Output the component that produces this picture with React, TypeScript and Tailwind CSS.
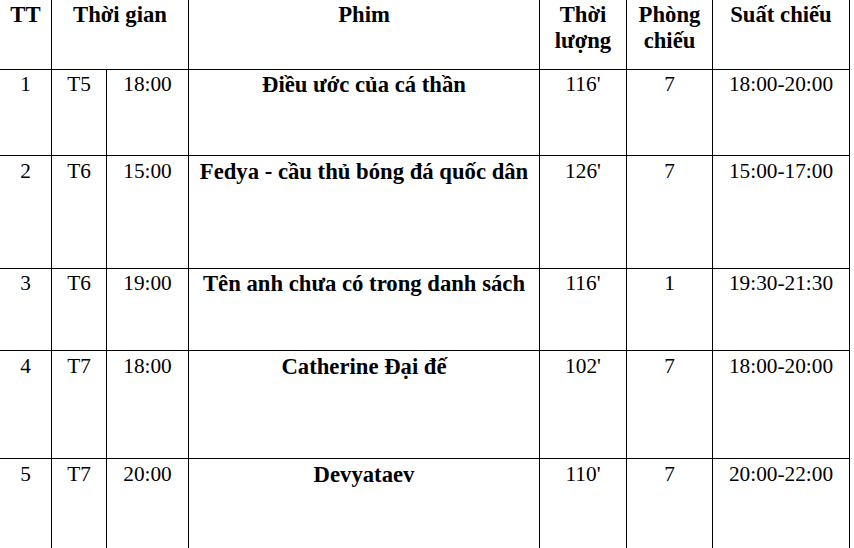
const COLS = 'grid-cols-[52px_55px_82px_351px_87px_86px_137px]'

const ROWS = [
  { tt: '1', day: 'T5', time: '18:00', film: 'Điều ước của cá thần', len: "116'", room: '7', show: '18:00-20:00', h: 'h-[86px]', pt: 'pt-[2px]' },
  { tt: '2', day: 'T6', time: '15:00', film: 'Fedya - cầu thủ bóng đá quốc dân', len: "126'", room: '7', show: '15:00-17:00', h: 'h-[113px]', pt: 'pt-[3px]' },
  { tt: '3', day: 'T6', time: '19:00', film: 'Tên anh chưa có trong danh sách', len: "116'", room: '1', show: '19:30-21:30', h: 'h-[82px]', pt: 'pt-[2px]' },
  { tt: '4', day: 'T7', time: '18:00', film: 'Catherine Đại đế', len: "102'", room: '7', show: '18:00-20:00', h: 'h-[108px]', pt: 'pt-[3px]' },
  { tt: '5', day: 'T7', time: '20:00', film: 'Devyataev', len: "110'", room: '7', show: '20:00-22:00', h: 'h-[108px]', pt: 'pt-[3px]' },
]

const cell = 'border-r border-b border-black text-center'
const bold = 'font-bold text-[22.7px]'

export default function App() {
  return (
    <div className="w-[854px] h-[548px] overflow-hidden bg-white text-black text-[21.3px] leading-[25px] font-['Liberation_Serif','Times_New_Roman',serif]">
      <div className={`grid ${COLS}`}>
        {/* header */}
        <div className={`${cell} ${bold} h-[70px] pt-[2px]`}>TT</div>
        <div className={`${cell} ${bold} col-span-2 pt-[2px]`}>Thời gian</div>
        <div className={`${cell} ${bold} pt-[2px]`}>Phim</div>
        <div className={`${cell} ${bold} pt-[2px] leading-[26px]`}>
          Thời
          <br />
          lượng
        </div>
        <div className={`${cell} ${bold} pt-[2px] leading-[26px]`}>
          Phòng
          <br />
          chiếu
        </div>
        <div className={`${cell} ${bold} pt-[2px]`}>Suất chiếu</div>

        {ROWS.map((r) => (
          <div key={r.tt} className="contents">
            <div className={`${cell} ${r.h} ${r.pt}`}>{r.tt}</div>
            <div className={`${cell} ${r.pt}`}>{r.day}</div>
            <div className={`${cell} ${r.pt}`}>{r.time}</div>
            <div className={`${cell} ${bold} ${r.pt}`}>{r.film}</div>
            <div className={`${cell} ${r.pt}`}>{r.len}</div>
            <div className={`${cell} ${r.pt}`}>{r.room}</div>
            <div className={`${cell} ${r.pt}`}>{r.show}</div>
          </div>
        ))}
      </div>
    </div>
  )
}
